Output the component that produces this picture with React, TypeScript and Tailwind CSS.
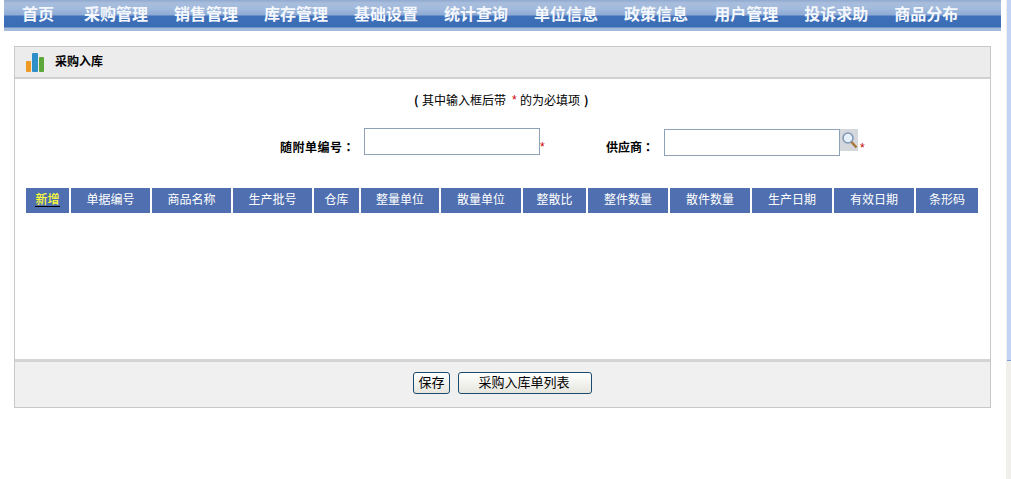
const nav = ["采购管理","销售管理","库存管理","基础设置","统计查询","单位信息","政策信息","用户管理","投诉求助","商品分布"];
const cols = ["单据编号","商品名称","生产批号","仓库","整量单位","散量单位","整散比","整件数量","散件数量","生产日期","有效日期","条形码"];

export default function App() {
  return (
    <div className="relative h-[479px] w-[1011px] overflow-hidden bg-white font-['Noto_Sans_CJK_SC',sans-serif] text-[12px] text-black">
      <div className="absolute right-0 top-0 h-[479px] w-[5px] bg-[#f0efeb] pl-[1px]">
        <div className="h-[361px] w-full border-b border-[#7f9fd0] bg-[#c3d3f5]" />
      </div>
      <div className="ml-[4px] flex h-[31px] w-[997px] items-center gap-[26px] bg-[linear-gradient(#8fa9d0_0,#a9bddc_3px,#a3bbdd_8px,#8dabd6_15px,#3f70b9_16px,#3a6db5_27px,#a3badb_28px,#a3badb_31px)] pb-[6px] pl-[18px] text-[16px] font-bold leading-none text-[#f4f7fc]">
        <span className="mr-[4px]">首页</span>
        {nav.map((n) => <span key={n}>{n}</span>)}
      </div>
      <div className="ml-[14px] mt-[15px] flex h-[362px] w-[977px] flex-col border border-[#c8c8c8]">
        <div className="flex h-[32px] items-center border-b-2 border-[#d0d0d0] bg-[#ececec] pl-[11px]">
          <svg width="18" height="20" viewBox="0 0 18 20" className="mr-[11px]">
            <rect x="0" y="9" width="5" height="11" rx="1" fill="#ef9a22" />
            <rect x="6" y="1" width="6" height="19" rx="1" fill="#2f8fc9" />
            <rect x="13" y="5" width="5" height="15" rx="1" fill="#5da63a" />
          </svg>
          <span className="-mt-[2px] text-[12px] font-bold">采购入库</span>
        </div>
        <div className="flex-1 bg-white">
          <p className="mt-[12px] flex pl-[399px] text-[12px] leading-[18px]">
            <b className="w-[8px]">(</b>
            <span>其中输入框后带</span>
            <span className="ml-[6px] w-[8px] font-['Liberation_Sans'] text-[#c00]">*</span>
            <span>的为必填项</span>
            <b className="ml-[4px]">)</b>
          </p>
          <div className="mt-[19px] flex h-[28px] items-start pl-[265px]">
            <span className="mt-[10px] flex w-[84px] font-bold tracking-[0.5px]">随附单编号<span className="font-['Noto_Sans_CJK_TC']">：</span></span>
            <input className="h-[27px] w-[176px] border border-[#8ea2b8] bg-white" />
            <span className="mt-[10px] w-[66px] font-['Liberation_Sans'] text-[#c00]">*</span>
            <span className="mt-[10px] flex w-[58px] font-bold">供应商<span className="font-['Noto_Sans_CJK_TC']">：</span></span>
            <input className="mt-[1px] h-[27px] w-[176px] border border-[#8ea2b8] bg-white" />
            <span className="mt-[1px] flex h-[22px] w-[18px] items-center justify-center bg-[#d4d8dc]">
              <svg width="17" height="18" viewBox="0 0 17 18">
                <circle cx="7" cy="7" r="5" fill="#e6f0fa" stroke="#7d97b5" strokeWidth="1.5" />
                <path d="M10.5 11l5 5.5" stroke="#a8763c" strokeWidth="2.5" />
              </svg>
            </span>
            <span className="ml-[2px] mt-[11px] font-['Liberation_Sans'] text-[#c00]">*</span>
          </div>
          <div className="ml-[11px] mt-[32px] grid h-[25px] w-[952px] grid-cols-[43px_79px_79px_79px_45px_78px_80px_63px_80px_80px_80px_80px_62px] gap-x-[2px] text-center leading-[22px] text-white">
            <div className="bg-[#4f6fb0]"><span className="inline-block h-[18px] border-b border-black font-medium leading-[20px] text-[#ffff33]">新增</span></div>
            {cols.map((c) => <div key={c} className="bg-[#4f6fb0]">{c}</div>)}
          </div>
        </div>
        <div className="flex h-[48px] items-start justify-center gap-[8px] border-t-[3px] border-[#d4d4d4] bg-[#f0f0f0] pt-[10px]">
          <button className="h-[22px] w-[37px] rounded-[3px] border border-[#1c4a6e] bg-[linear-gradient(#ffffff,#e6e6de)] pb-[3px] text-[13px] leading-[16px]">保存</button>
          <button className="h-[22px] w-[134px] rounded-[3px] border border-[#1c4a6e] bg-[linear-gradient(#ffffff,#e6e6de)] pb-[3px] pr-[2px] text-[13px] leading-[16px]">采购入库单列表</button>
        </div>
      </div>
    </div>
  );
}
